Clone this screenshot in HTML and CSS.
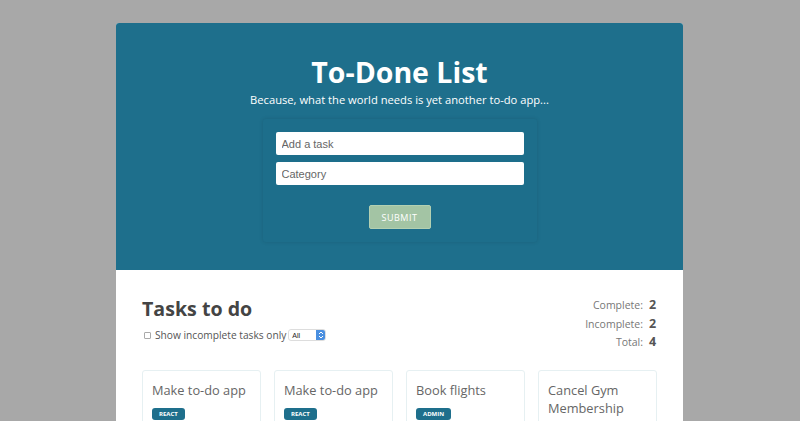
FILE: index.html
```html
<!DOCTYPE html>
<html>
<head>
<meta charset="utf-8">
<link rel="stylesheet" href="styles.css">
</head>
<body>
<div class="app">
  <header class="hero">
    <h1 class="title">To-Done List</h1>
    <p class="subtitle">Because, what the world needs is yet another to-do app...</p>
    <form class="task-form">
      <input class="field" type="text" placeholder="Add a task">
      <input class="field" type="text" placeholder="Category">
      <div class="submit-row"><button class="submit" type="button">SUBMIT</button></div>
    </form>
  </header>
  <main class="content">
    <div class="top-row">
      <div class="heading-block">
        <h2 class="heading">Tasks to do</h2>
        <label class="filter"><span class="check"></span><span>Show incomplete tasks only</span><span class="select"><span class="select-text">All</span><span class="select-arrow"><svg width="6" height="8" viewBox="0 0 6 8"><path d="M1 3 L3 1 L5 3 M1 5 L3 7 L5 5" fill="none" stroke="#fff" stroke-width="1"/></svg></span></span></label>
      </div>
      <div class="stats">
        <div class="stat"><span class="stat-label">Complete:</span><span class="stat-num">2</span></div>
        <div class="stat"><span class="stat-label">Incomplete:</span><span class="stat-num">2</span></div>
        <div class="stat"><span class="stat-label">Total:</span><span class="stat-num">4</span></div>
      </div>
    </div>
    <div class="cards">
      <div class="card"><div class="card-title">Make to-do app</div><span class="badge">REACT</span></div>
      <div class="card"><div class="card-title">Make to-do app</div><span class="badge">REACT</span></div>
      <div class="card"><div class="card-title">Book flights</div><span class="badge">ADMIN</span></div>
      <div class="card"><div class="card-title">Cancel Gym Membership</div></div>
    </div>
  </main>
</div>
</body>
</html>
```
FILE: styles.css
```css
* { box-sizing: border-box; }
html, body { margin: 0; padding: 0; }
body {
  background: #a8a8a8;
  font-family: "Open Sans", "Noto Sans", sans-serif;
  height: 421px;
  overflow: hidden;
}
.app {
  width: 567px;
  margin: 23px 0 0 116px;
  background: #fff;
  border-radius: 3px 3px 0 0;
  overflow: hidden;
  min-height: 420px;
}
.hero {
  background: #1e6f8c;
  padding: 31px 0 28px;
  text-align: center;
  color: #fff;
}
.title {
  margin: 0;
  font-size: 28.5px;
  line-height: 36px;
  font-weight: 700;
}
.subtitle {
  margin: 1px 0 0;
  font-size: 11.2px;
  line-height: 18px;
}
.task-form {
  width: 274px;
  margin: 10px auto 0;
  padding: 13px;
  display: flex;
  flex-direction: column;
  gap: 7px;
  box-shadow: 0 0 4px rgba(0,0,0,0.12);
  border-radius: 3px;
  background: #1d6e8b;
}
.field {
  height: 23px;
  border: none;
  border-radius: 2px;
  padding: 0 6px;
  font-family: "Liberation Sans", "Open Sans", sans-serif;
  font-size: 11px;
  color: #555;
  outline: none;
}
.field::placeholder { color: #666; }
.submit-row {
  display: flex;
  justify-content: center;
  padding-top: 13px;
}
.submit {
  width: 62px;
  height: 24px;
  background: #a3c4a4;
  color: #fff;
  border: 1px solid #b3d0b2;
  border-radius: 2px;
  font-family: "Open Sans", sans-serif;
  font-size: 9px;
  letter-spacing: 0.5px;
  padding: 0;
}
.content {
  padding: 24px 26px 0 26px;
}
.top-row {
  display: flex;
  justify-content: space-between;
  align-items: flex-start;
}
.heading {
  margin: 0;
  font-size: 19.6px;
  line-height: 30px;
  font-weight: 700;
  color: #444;
}
.filter {
  display: flex;
  align-items: center;
  margin-top: 4px;
  font-size: 10.2px;
  color: #555;
}
.check {
  width: 7px;
  height: 7px;
  margin: 0 4px 0 2px;
  border: 1px solid #aaa;
  border-radius: 1px;
  background: #fff;
}
.select {
  display: inline-flex;
  align-items: center;
  justify-content: space-between;
  width: 38px;
  height: 12px;
  margin-left: 2px;
  border: 1px solid #ddd;
  border-radius: 3px;
  background: #fff;
  font-family: "Liberation Sans", sans-serif;
  font-size: 7px;
  color: #222;
  padding-left: 3px;
  overflow: hidden;
}
.select-arrow {
  width: 9px;
  height: 12px;
  background: #4a8fe0;
  display: flex;
  align-items: center;
  justify-content: center;
}
.stats {
  display: flex;
  flex-direction: column;
  align-items: flex-end;
  margin-top: 2px;
}
.stat {
  line-height: 18.5px;
  display: flex;
  align-items: baseline;
}
.stat-label {
  font-size: 10.5px;
  color: #777;
}
.stat-num {
  font-size: 12.5px;
  font-weight: 700;
  color: #555;
  margin-left: 6px;
  width: 8px;
}
.cards {
  display: grid;
  grid-template-columns: repeat(4, 1fr);
  gap: 13px;
  margin-top: 18px;
}
.card {
  border: 1px solid #e6f0f2;
  border-radius: 3px;
  padding: 10px 9px;
  min-height: 60px;
}
.card-title {
  font-size: 12.8px;
  line-height: 18px;
  color: #666;
}
.badge {
  display: inline-block;
  margin-top: 3px;
  background: #1e6f8c;
  color: #fff;
  font-size: 6px;
  font-weight: 700;
  line-height: 12px;
  padding: 0 7px;
  border-radius: 3px;
}
```
